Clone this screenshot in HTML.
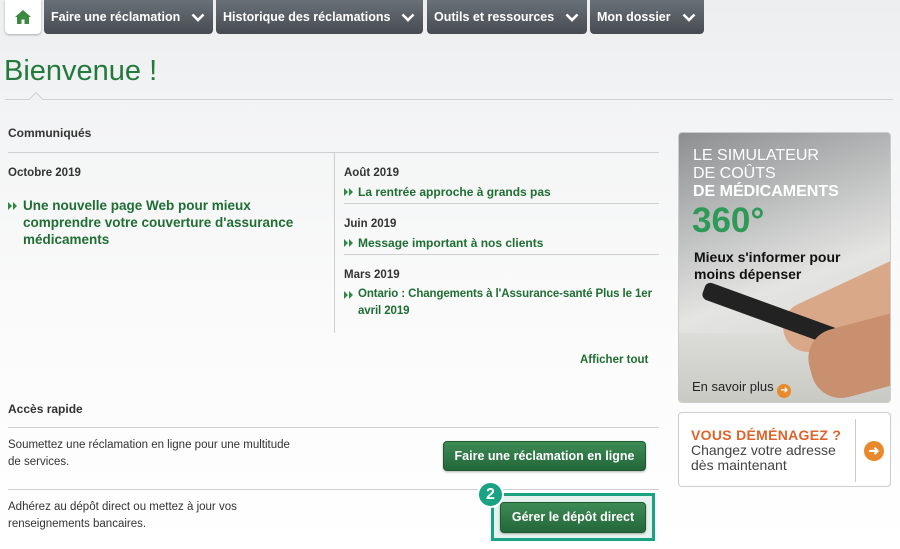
<!DOCTYPE html>
<html><head><meta charset="utf-8"><style>
*{margin:0;padding:0;box-sizing:border-box}
body{width:900px;height:549px;overflow:hidden;font-family:"Liberation Sans",Arial,sans-serif;background:linear-gradient(#eceeef 0,#f3f4f5 120px,#fafafa 300px,#fff 549px);position:relative;color:#333}
.a{position:absolute}
.tab{position:absolute;top:0;height:34px;background:linear-gradient(#6a7078,#474c52);border-radius:0 0 4px 4px;color:#fff;font-weight:bold;font-size:12.5px;line-height:34px;padding-left:7px}
.tab svg{position:absolute;right:8px;top:13px}
.g{color:#1f6e33;font-weight:bold}
.h{font-size:12px;font-weight:bold;color:#333}
.ln{position:absolute;height:1px;background:#cfcfcf}
.lk{font-size:12px;font-weight:bold;color:#1f6e33;line-height:18px;padding-left:14px;position:absolute}
.lk:before{content:"";position:absolute;left:0;top:5px;border-left:4px solid #2d8a45;border-top:4px solid transparent;border-bottom:4px solid transparent}
.lk:after{content:"";position:absolute;left:5px;top:5px;border-left:4px solid #2d8a45;border-top:4px solid transparent;border-bottom:4px solid transparent}
.btn{position:absolute;background:linear-gradient(#3d8b55,#23673a);border:1px solid #1d5a30;border-radius:4px;color:#fff;font-weight:bold;font-size:12.5px;text-align:center;box-shadow:0 1px 2px rgba(0,0,0,.3)}
.t{font-size:11.5px;color:#333;line-height:17px;position:absolute}
</style></head><body>
<div class="a" style="left:5px;top:0;width:36px;height:34px;background:#fff;border-radius:0 0 4px 4px;box-shadow:0 1px 2px #aaa">
<svg width="16" height="14" style="position:absolute;left:10px;top:10px" viewBox="0 0 16 14"><path d="M8 0L0 7h2v7h4.5V9.5h3V14H14V7h2z" fill="#3c8a3f"/></svg></div>
<div class="tab" style="left:44px;width:169px">Faire une réclamation<svg width="14" height="9" viewBox="0 0 14 9"><path d="M1.5 1.5L7 7l5.5-5.5" stroke="#fff" stroke-width="2.6" fill="none"/></svg></div>
<div class="tab" style="left:216px;width:207px">Historique des réclamations<svg width="14" height="9" viewBox="0 0 14 9"><path d="M1.5 1.5L7 7l5.5-5.5" stroke="#fff" stroke-width="2.6" fill="none"/></svg></div>
<div class="tab" style="left:427px;width:160px">Outils et ressources<svg width="14" height="9" viewBox="0 0 14 9"><path d="M1.5 1.5L7 7l5.5-5.5" stroke="#fff" stroke-width="2.6" fill="none"/></svg></div>
<div class="tab" style="left:590px;width:114px">Mon dossier<svg width="14" height="9" viewBox="0 0 14 9"><path d="M1.5 1.5L7 7l5.5-5.5" stroke="#fff" stroke-width="2.6" fill="none"/></svg></div>

<div class="a" style="left:4px;top:55px;font-size:29px;color:#237a3c">Bienvenue !</div>
<div class="ln" style="left:5px;top:99px;width:888px;background:#d0d0d0"></div>
<div class="a" style="left:31px;top:94px;width:10px;height:10px;border-left:1px solid #d0d0d0;border-top:1px solid #d0d0d0;transform:rotate(45deg);background:#f1f2f3"></div>

<div class="a h" style="left:8px;top:126px">Communiqués</div>
<div class="ln" style="left:8px;top:152px;width:651px"></div>
<div class="a" style="left:334px;top:152px;width:1px;height:181px;background:#cfcfcf"></div>
<div class="a h" style="left:8px;top:167px;font-size:11.5px">Octobre 2019</div>
<div class="lk" style="left:8px;top:197px;font-size:13.5px;line-height:17px;width:300px;padding-left:15px">Une nouvelle page Web pour mieux comprendre votre couverture d'assurance médicaments</div>
<div class="a h" style="left:344px;top:167px;font-size:11.5px">Août 2019</div>
<div class="lk" style="left:344px;top:183px">La rentrée approche à grands pas</div>
<div class="ln" style="left:344px;top:203px;width:315px"></div>
<div class="a h" style="left:344px;top:218px;font-size:11.5px">Juin 2019</div>
<div class="lk" style="left:344px;top:234px">Message important à nos clients</div>
<div class="ln" style="left:344px;top:254px;width:315px"></div>
<div class="a h" style="left:344px;top:269px;font-size:11.5px">Mars 2019</div>
<div class="lk" style="left:344px;top:286px;width:318px;line-height:17px;font-size:11.5px;letter-spacing:-.1px">Ontario : Changements à l'Assurance-santé Plus le 1er avril 2019</div>
<div class="a g" style="left:580px;top:354px;font-size:11.5px">Afficher tout</div>

<div class="a h" style="left:8px;top:402px">Accès rapide</div>
<div class="ln" style="left:8px;top:427px;width:651px"></div>
<div class="t" style="left:8px;top:437px">Soumettez une réclamation en ligne pour une multitude<br>de services.</div>
<div class="btn" style="left:443px;top:441px;width:203px;height:30px;line-height:28px">Faire une réclamation en ligne</div>
<div class="ln" style="left:8px;top:489px;width:651px"></div>
<div class="t" style="left:8px;top:499px">Adhérez au dépôt direct ou mettez à jour vos<br>renseignements bancaires.</div>
<div class="a" style="left:491px;top:493px;width:164px;height:48px;border:3px solid #1aa383;background:#e6f2ee"></div>
<div class="btn" style="left:500px;top:502px;width:146px;height:31px;line-height:29px">Gérer le dépôt direct</div>
<div class="a" style="left:477px;top:481px;width:27px;height:27px;border-radius:50%;background:#1aa383;border:2px solid #fff;color:#fff;font-weight:bold;font-size:16px;text-align:center;line-height:23px">2</div>

<div class="a" style="left:678px;top:132px;width:213px;height:271px;border-radius:4px;overflow:hidden;background:linear-gradient(160deg,#8c8e90 0,#bdbfbf 30%,#e4e4e2 55%,#d0d0cc 100%);border:1px solid #ccc">
<div class="a" style="left:0;top:200px;width:213px;height:71px;background:linear-gradient(#dcdcd8,#c9c9c4)"></div>
<div class="a" style="left:100px;top:150px;width:140px;height:50px;background:#d9a888;border-radius:40px 0 0 40px;transform:rotate(-25deg)"></div>
<div class="a" style="left:20px;top:175px;width:160px;height:18px;background:#222;border-radius:6px;transform:rotate(20deg)"></div>
<div class="a" style="left:130px;top:190px;width:100px;height:70px;background:#c8906e;border-radius:30px 0 0 30px;transform:rotate(-15deg)"></div>
<div class="a" style="left:14px;top:14px;color:#fff;font-size:16px;line-height:18px">LE SIMULATEUR<br>DE COÛTS<br><b>DE MÉDICAMENTS</b></div>
<div class="a" style="left:13px;top:68px;color:#2f9a57;font-size:35px;font-weight:bold">360°</div>
<div class="a" style="left:15px;top:116px;color:#111;font-size:14px;font-weight:bold;line-height:17px">Mieux s'informer pour<br>moins dépenser</div>
<div class="a" style="left:13px;top:246px;color:#222;font-size:13px">En savoir plus <span style="display:inline-block;width:14px;height:14px;border-radius:50%;background:#e8892b;color:#fff;font-size:10px;line-height:14px;text-align:center;vertical-align:-2px">➜</span></div>
</div>

<div class="a" style="left:678px;top:412px;width:213px;height:75px;background:#fff;border:1px solid #ccc;border-radius:4px">
<div class="a" style="left:12px;top:14px;color:#e0632a;font-size:14px;font-weight:bold;letter-spacing:.3px">VOUS DÉMÉNAGEZ ?</div>
<div class="a" style="left:12px;top:30px;color:#444;font-size:14px;line-height:15px">Changez votre adresse<br>dès maintenant</div>
<div class="a" style="left:176px;top:6px;width:1px;height:63px;background:#ccc"></div>
<div class="a" style="left:185px;top:28px;width:20px;height:20px;border-radius:50%;background:#e8892b;color:#fff;font-size:13px;line-height:20px;text-align:center;font-weight:bold">➜</div>
</div>
</body></html>
